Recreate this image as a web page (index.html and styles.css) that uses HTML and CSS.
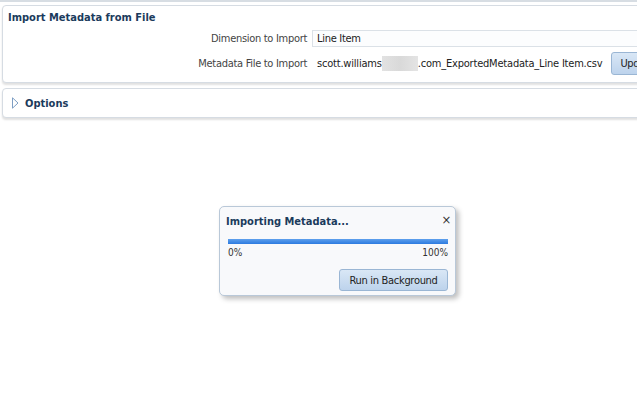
FILE: index.html
```html
<!DOCTYPE html>
<html>
<head>
<meta charset="utf-8">
<link rel="stylesheet" href="styles.css">
</head>
<body>
<div class="topline"></div>
<section class="panel main">
  <h1 class="title">Import Metadata from File</h1>
  <div class="form">
    <div class="row">
      <span class="label">Dimension to Import</span>
      <div class="field">Line Item</div>
    </div>
    <div class="row file">
      <span class="label">Metadata File to Import</span>
      <div class="filename">scott.williams<span class="blur"></span>.com_ExportedMetadata_Line Item.csv</div>
      <button class="btn upd">Update</button>
    </div>
  </div>
</section>
<section class="panel options">
  <svg class="tri" width="7" height="12" viewBox="0 0 7 12"><path d="M0.5 0.8 L6 6 L0.5 11.2 Z" fill="#fff" stroke="#7e9fc4" stroke-width="1"/></svg>
  <span class="opt-label">Options</span>
</section>
<div class="stage">
  <div class="dialog">
    <div class="dlg-head">
      <span class="dlg-title">Importing Metadata...</span>
      <span class="close">×</span>
    </div>
    <div class="bar"><div class="fill" style="width:100%"></div></div>
    <div class="scale"><span>0%</span><span>100%</span></div>
    <div class="dlg-foot"><button class="btn run">Run in Background</button></div>
  </div>
</div>
</body>
</html>
```
FILE: styles.css
```css
html, body { margin: 0; padding: 0; background: #fff; }
body {
  width: 637px; height: 414px; overflow: hidden;
  font-family: "DejaVu Sans Condensed", "Liberation Sans", sans-serif;
  font-size: 11px; color: #333; letter-spacing: -0.3px;
}
.topline { height: 2px; background: #d7dde3; }
.panel {
  margin: 3px 0 0 2px; width: 660px; box-sizing: border-box;
  border: 1px solid #d6dce3; border-radius: 4px 0 0 4px;
  background: #fff;
  box-shadow: 0 2px 2px rgba(0,0,0,0.12);
}
.main { height: 78px; padding: 5px 0 0 5px; }
.title { margin: 0; font-size: 11px; font-weight: bold; color: #1b3b5c; line-height: 13px; letter-spacing: 0; }
.form { margin-top: 6px; display: flex; flex-direction: column; }
.row { display: flex; align-items: center; }
.label { flex-shrink: 0; width: 304px; text-align: right; color: #444; padding-right: 5px; box-sizing: border-box; }
.field {
  flex: 1; height: 15px; line-height: 15px; padding-left: 4px;
  border-top: 1px solid #dbe1e7; border-bottom: 1px solid #dbe1e7; border-left: 1px solid #dbe1e7;
  background: #fcfdfe; color: #222;
}
.row.file { margin-top: 5px; height: 23px; }
.filename { flex-shrink: 0; padding-left: 5px; color: #222; white-space: nowrap; display: flex; align-items: center; letter-spacing: -0.2px; }
.blur { display: inline-block; width: 36px; height: 15px; background: linear-gradient(90deg, #e2e2e2, #d9d9d9 50%, #e4e4e4); }
.btn {
  font-family: inherit; font-size: 11px; color: #222; letter-spacing: -0.3px;
  border: 1px solid #9ab6d4; border-radius: 3px;
  background: linear-gradient(#d9e7f6, #bdd3ec);
  padding: 0 8px; cursor: default;
}
.upd { flex-shrink: 0; margin-left: 9px; height: 23px; }
.options { margin-top: 5px; height: 30px; display: flex; align-items: center; padding-left: 9px; }
.tri { margin-right: 6px; }
.opt-label { font-size: 11px; font-weight: bold; color: #1b3b5c; letter-spacing: 0; }
.stage { position: relative; }
.dialog {
  position: absolute; left: 219px; top: 88px; width: 237px; height: 90px; box-sizing: border-box;
  border: 1px solid #b9c8d8; border-radius: 5px; background: #f8f9fb;
  box-shadow: 3px 3px 5px rgba(0,0,0,0.25);
  padding: 5px 7px 0 8px;
  display: flex; flex-direction: column;
}
.dlg-head { display: flex; justify-content: space-between; align-items: center; height: 18px; }
.dlg-title { font-size: 11px; font-weight: bold; color: #1b3b5c; margin-left: -2px; letter-spacing: 0; }
.close { font-size: 13px; color: #333; margin-right: -3px; margin-top: -4px; }
.bar { margin-top: 9px; height: 5px; background: #dde7f2; }
.fill { height: 100%; background: linear-gradient(#5ea0ec, #2c7ae0); }
.scale { display: flex; justify-content: space-between; font-size: 10px; color: #333; margin-top: 3px; letter-spacing: 0; }
.dlg-foot { display: flex; justify-content: flex-end; margin-top: 11px; }
.run { height: 22px; width: 109px; padding: 0; }
```
